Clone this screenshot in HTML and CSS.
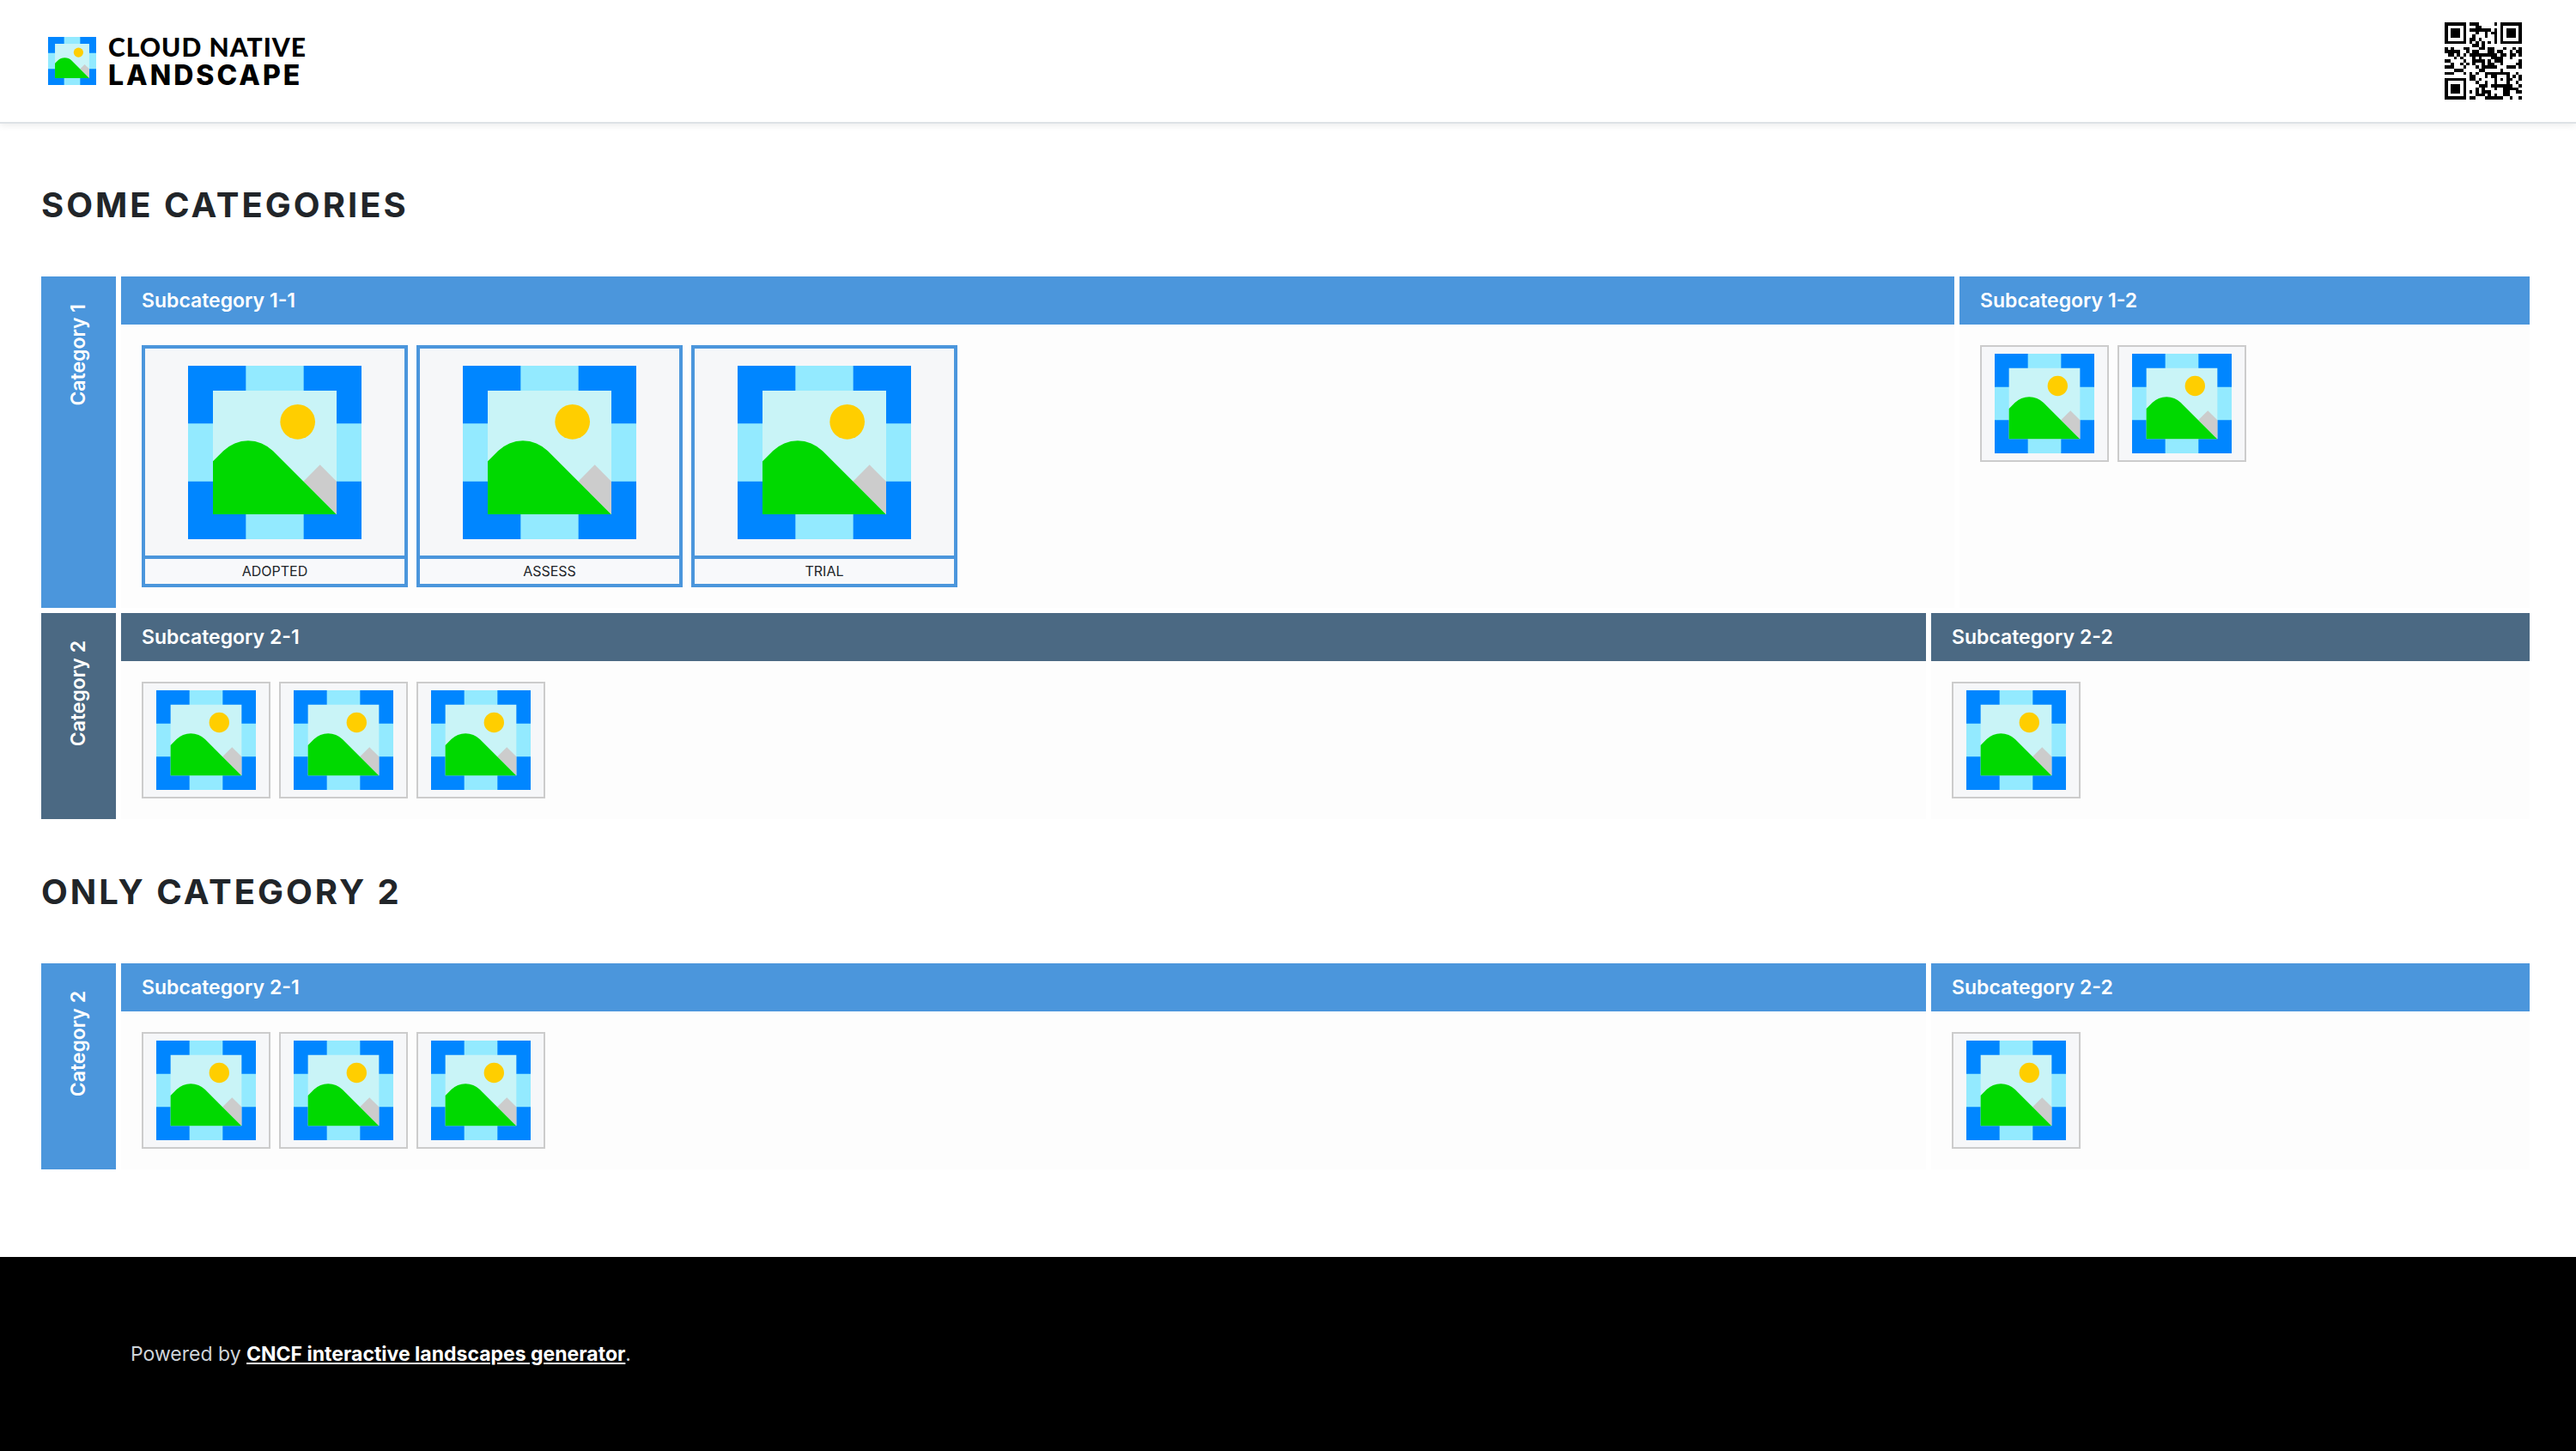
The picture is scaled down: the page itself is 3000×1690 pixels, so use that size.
FILE: index.html
```html
<!DOCTYPE html>
<html lang="en">
<head>
<meta charset="utf-8">
<meta name="viewport" content="width=device-width, initial-scale=1">
<title>Cloud Native Landscape</title>
<link rel="stylesheet" href="styles.css">
</head>
<body>
<svg class="defs" aria-hidden="true">
  <symbol id="picture" viewBox="0 0 606 606">
    <path fill="#93eaff" d="M0 0h606v606H0z"/>
    <path fill="#0086ff" d="M0 0h202v202H0zM404 0h202v202H404zM0 404h202v202H0zM404 404h202v202H404z"/>
    <path fill="#c9f4f7" d="M87 87h432v432H87z"/>
    <circle cx="383" cy="196" r="61" fill="#ffce00"/>
    <path fill="#ccc" d="M403 404L461 346L519 404V519z"/>
    <path fill="#00d900" d="M87 519V334L123 298A123 123 0 0 1 297 298L518 519z"/>
  </symbol>
</svg>

<header class="topbar">
  <a class="brand" href="#">
    <svg class="brand-mark" aria-hidden="true"><use href="#picture"/></svg>
    <span class="brand-name"><span class="brand-top">CLOUD NATIVE</span><span class="brand-bottom">LANDSCAPE</span></span>
  </a>
  <svg class="qr" id="qr" viewBox="0 0 25 25" role="img" aria-label="QR code" shape-rendering="crispEdges"></svg>
</header>

<main class="content">
  <section class="group">
    <h2 class="group-title">SOME CATEGORIES</h2>
    <div class="chart">
      <div class="category">
        <h3 class="category-name"><span>Category 1</span></h3>
        <div class="subcategory" style="flex-grow:2135">
          <h4 class="subcategory-name">Subcategory 1-1</h4>
          <div class="items">
            <button class="item featured" type="button"><svg class="logo"><use href="#picture"/></svg><span class="item-label">ADOPTED</span></button>
            <button class="item featured" type="button"><svg class="logo"><use href="#picture"/></svg><span class="item-label">ASSESS</span></button>
            <button class="item featured" type="button"><svg class="logo"><use href="#picture"/></svg><span class="item-label">TRIAL</span></button>
          </div>
        </div>
        <div class="subcategory" style="flex-grow:664">
          <h4 class="subcategory-name">Subcategory 1-2</h4>
          <div class="items">
            <button class="item" type="button" aria-label="Item"><svg class="logo"><use href="#picture"/></svg></button>
            <button class="item" type="button" aria-label="Item"><svg class="logo"><use href="#picture"/></svg></button>
          </div>
        </div>
      </div>
      <div class="category slate">
        <h3 class="category-name"><span>Category 2</span></h3>
        <div class="subcategory" style="flex-grow:2102">
          <h4 class="subcategory-name">Subcategory 2-1</h4>
          <div class="items">
            <button class="item" type="button" aria-label="Item"><svg class="logo"><use href="#picture"/></svg></button>
            <button class="item" type="button" aria-label="Item"><svg class="logo"><use href="#picture"/></svg></button>
            <button class="item" type="button" aria-label="Item"><svg class="logo"><use href="#picture"/></svg></button>
          </div>
        </div>
        <div class="subcategory" style="flex-grow:697">
          <h4 class="subcategory-name">Subcategory 2-2</h4>
          <div class="items">
            <button class="item" type="button" aria-label="Item"><svg class="logo"><use href="#picture"/></svg></button>
          </div>
        </div>
      </div>
    </div>
  </section>

  <section class="group">
    <h2 class="group-title">ONLY CATEGORY 2</h2>
    <div class="chart">
      <div class="category">
        <h3 class="category-name"><span>Category 2</span></h3>
        <div class="subcategory" style="flex-grow:2102">
          <h4 class="subcategory-name">Subcategory 2-1</h4>
          <div class="items">
            <button class="item" type="button" aria-label="Item"><svg class="logo"><use href="#picture"/></svg></button>
            <button class="item" type="button" aria-label="Item"><svg class="logo"><use href="#picture"/></svg></button>
            <button class="item" type="button" aria-label="Item"><svg class="logo"><use href="#picture"/></svg></button>
          </div>
        </div>
        <div class="subcategory" style="flex-grow:697">
          <h4 class="subcategory-name">Subcategory 2-2</h4>
          <div class="items">
            <button class="item" type="button" aria-label="Item"><svg class="logo"><use href="#picture"/></svg></button>
          </div>
        </div>
      </div>
    </div>
  </section>
</main>

<footer class="footer">
  <p>Powered by <a href="#">CNCF interactive landscapes generator</a>.</p>
</footer>
<script src="qr.js"></script>
</body>
</html>
```
FILE: styles.css
```css
* { box-sizing: border-box; }
body {
  margin: 0;
  min-height: 100vh;
  display: flex;
  flex-direction: column;
  background: #fff;
  color: #212529;
  font-family: Inter, "Liberation Sans", sans-serif;
}
h2, h3, h4, p { margin: 0; }
.defs { display: none; }

.topbar {
  display: flex;
  align-items: center;
  justify-content: space-between;
  height: 144px;
  padding: 0 63px 0 56px;
  border-bottom: 2px solid #dee2e6;
  box-shadow: 0 2px 8px rgba(0, 0, 0, .08);
}
.brand { display: flex; align-items: center; gap: 14px; color: #000; text-decoration: none; }
.brand-mark { width: 56px; height: 56px; }
.brand-name { display: flex; flex-direction: column; line-height: 33px; }
.brand-top { font-family: Lato, sans-serif; font-size: 30px; font-weight: 900; letter-spacing: 1px; }
.brand-bottom { font-size: 32px; font-weight: 800; letter-spacing: 3px; }
.qr { width: 90px; height: 90px; }

.content { flex: 1; padding: 10px 54px 102px 48px; }
.group { padding-top: 61px; }
.group-title { margin-bottom: 59px; font-size: 40px; line-height: 48px; font-weight: 700; letter-spacing: 3px; }

.chart { display: flex; flex-direction: column; gap: 6px; }
.category { display: flex; gap: 6px; --tone: #4b96dc; }
.category.slate { --tone: #4b6983; }
.category-name {
  display: flex;
  align-items: flex-start;
  justify-content: center;
  width: 87px;
  padding: 32px 2px 0 0;
  background: var(--tone);
  color: #fff;
  font-size: 23px;
  line-height: 28px;
  font-weight: 600;
}
.category-name span { writing-mode: vertical-rl; transform: rotate(180deg); }
.subcategory { flex: 1 1 0; display: flex; flex-direction: column; background: #fdfdfd; }
.subcategory-name {
  padding: 14px 24px;
  background: var(--tone);
  color: #fff;
  font-size: 23px;
  line-height: 28px;
  font-weight: 600;
}
.items { display: flex; flex-wrap: wrap; gap: 10px; padding: 24px; }
.item {
  display: flex;
  align-items: center;
  justify-content: center;
  width: 150px;
  height: 136px;
  padding: 0;
  border: 2px solid #ccc;
  background: #f6f7f9;
  color: inherit;
  font: inherit;
}
.logo { width: 116px; height: 116px; }
.featured {
  flex-direction: column;
  justify-content: space-between;
  width: 310px;
  height: 282px;
  padding-top: 20px;
  border: 4px solid #4b96dc;
}
.featured .logo { width: 202px; height: 202px; }
.item-label {
  align-self: stretch;
  border-top: 4px solid #4b96dc;
  background: #f8f9fb;
  font-size: 16px;
  line-height: 29px;
  text-align: center;
}

.footer {
  display: flex;
  align-items: center;
  height: 226px;
  padding: 0 152px;
  background: #000;
  color: #ced4da;
  font-size: 23px;
  line-height: 32px;
}
.footer a { color: #fff; font-weight: 700; }
```
FILE: qr.js
```js
// Version 2 QR code (25 x 25), byte mode, error correction level M.
const SIZE = 25, DATA = 28, ECC = 16;

function multiply(a, b) {
  let z = 0;
  for (let i = 7; i >= 0; i--) {
    z = (z << 1) ^ ((z >>> 7) * 0x11d);
    z ^= ((b >>> i) & 1) * a;
  }
  return z;
}

function codewords(text) {
  const byte = n => n.toString(2).padStart(8, '0');
  const bits = '0100' + byte(text.length) + [...text].map(c => byte(c.charCodeAt(0))).join('') + '0000';
  const data = bits.match(/.{8}/g).map(b => parseInt(b, 2));
  for (let pad = 0xec; data.length < DATA; pad ^= 0xec ^ 0x11) data.push(pad);
  const gen = new Array(ECC).fill(0);
  gen[ECC - 1] = 1;
  for (let i = 0, root = 1; i < ECC; i++, root = multiply(root, 2)) {
    for (let j = 0; j < ECC; j++) {
      gen[j] = multiply(gen[j], root);
      if (j + 1 < ECC) gen[j] ^= gen[j + 1];
    }
  }
  const ecc = new Array(ECC).fill(0);
  for (const b of data) {
    const f = b ^ ecc.shift();
    ecc.push(0);
    gen.forEach((g, i) => { ecc[i] ^= multiply(g, f); });
  }
  return data.concat(ecc);
}

function matrix(text) {
  const m = Array.from({ length: SIZE }, () => Array(SIZE).fill(0));
  const fixed = Array.from({ length: SIZE }, () => Array(SIZE).fill(false));
  const set = (x, y, v) => { m[y][x] = v ? 1 : 0; fixed[y][x] = true; };
  const ring = (cx, cy, r, light) => {
    for (let dy = -r; dy <= r; dy++) for (let dx = -r; dx <= r; dx++) {
      const x = cx + dx, y = cy + dy;
      if (x < 0 || y < 0 || x >= SIZE || y >= SIZE) continue;
      set(x, y, !light.includes(Math.max(Math.abs(dx), Math.abs(dy))));
    }
  };
  for (let i = 0; i < SIZE; i++) { set(6, i, i % 2 === 0); set(i, 6, i % 2 === 0); }
  ring(3, 3, 4, [2, 4]);
  ring(SIZE - 4, 3, 4, [2, 4]);
  ring(3, SIZE - 4, 4, [2, 4]);
  ring(18, 18, 2, [1]);

  // Format bits for level M with mask 1
  const bit = i => (0b101000100100101 >>> i) & 1;
  for (let i = 0; i < 6; i++) set(8, i, bit(i));
  set(8, 7, bit(6)); set(8, 8, bit(7)); set(7, 8, bit(8));
  for (let i = 9; i < 15; i++) set(14 - i, 8, bit(i));
  for (let i = 0; i < 8; i++) set(SIZE - 1 - i, 8, bit(i));
  for (let i = 8; i < 15; i++) set(8, SIZE - 15 + i, bit(i));
  set(8, SIZE - 8, 1);

  const words = codewords(text);
  let k = 0;
  for (let right = SIZE - 1; right >= 1; right -= 2) {
    if (right === 6) right = 5;
    for (let v = 0; v < SIZE; v++) for (let j = 0; j < 2; j++) {
      const x = right - j, y = ((right + 1) & 2) === 0 ? SIZE - 1 - v : v;
      if (fixed[y][x]) continue;
      const value = k < words.length * 8 ? (words[k >> 3] >>> (7 - (k & 7))) & 1 : 0;
      m[y][x] = value ^ (y % 2 === 0 ? 1 : 0);
      k++;
    }
  }
  return m;
}

let d = '';
matrix('http://127.0.0.1:8000').forEach((row, y) => row.forEach((on, x) => {
  if (on) d += `M${x} ${y}h1v1h-1z`;
}));
document.getElementById('qr').innerHTML = `<path d="${d}"/>`;
```
